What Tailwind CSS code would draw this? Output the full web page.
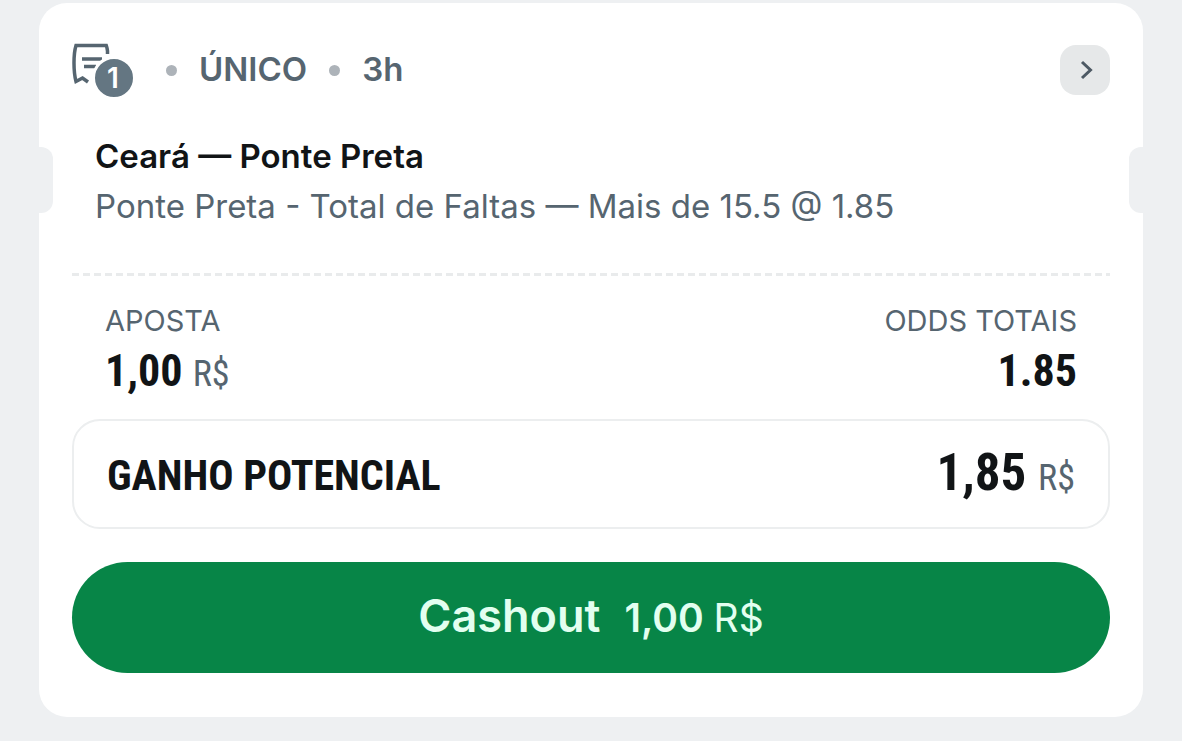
<!DOCTYPE html>
<html lang="pt-BR">

<head>
    <meta charset="UTF-8">
    <meta name="viewport" content="width=device-width, initial-scale=1.0">
    <title>Aposta</title>
    <script src="https://cdn.jsdelivr.net/npm/@tailwindcss/browser@4"></script>
</head>

<body class="min-h-screen bg-[#eef0f2] px-[39px] pt-[3px] pb-6 font-['Inter',sans-serif] text-[#566570]">

    <main class="relative rounded-[28px] bg-white px-[33px] pt-[42px] pb-11">
        <!-- Recortes laterales -->
        <span class="absolute left-0 top-36 h-[66px] w-[14px] rounded-r-xl bg-[#eef0f2]"></span>
        <span class="absolute right-0 top-36 h-[66px] w-[14px] rounded-l-xl bg-[#eef0f2]"></span>

        <header class="flex h-[50px] items-center justify-between">
            <div class="flex items-center text-[33px] font-semibold">
                <div class="relative h-[54px] w-[62px]">
                    <svg class="h-full w-full" viewBox="0 0 62 54" fill="none" stroke="#566570" stroke-width="3.500">
                        <path d="M35.500 11V8Q35.200 5 34.300 2.500H4Q2 9 2 20Q2 31 4 38.500L10.500 35L16 39" />
                        <path d="M10 16H30M12 23.500H24" />
                        <circle cx="42" cy="35" r="20.500" fill="#647682" stroke="#fff" stroke-width="3" />
                    </svg>
                    <span class="absolute left-[22px] top-4 w-[38px] text-center text-[28px] leading-[38px] font-semibold text-white">1</span>
                </div>
                <span class="ml-8 size-[11px] rounded-full bg-[#adb3b9]"></span>
                <span class="ml-[22px]">ÚNICO</span>
                <span class="ml-[22px] size-[11px] rounded-full bg-[#adb3b9]"></span>
                <span class="ml-[22px]">3h</span>
            </div>
            <button type="button" aria-label="Ver detalhes" class="flex size-[50px] items-center justify-center rounded-2xl bg-[#e6e8e9]">
                <svg class="size-5" viewBox="0 0 20 20" fill="none" stroke="#4d5964" stroke-width="3">
                    <path d="M7 2L15.500 10L7 18" />
                </svg>
            </button>
        </header>

        <section class="mt-9 px-[23px] text-[33px] leading-[50px]">
            <h1 class="font-semibold text-[#111416]">Ceará — Ponte Preta</h1>
            <p>Ponte Preta - Total de Faltas — Mais de 15.5 @ 1.85</p>
        </section>

        <div class="mt-[42px] h-[3px] bg-[repeating-linear-gradient(90deg,#e9ebec_0_7px,transparent_7px_11px)]"></div>

        <dl class="mt-[25px] flex justify-between px-[33px]">
            <div>
                <dt class="text-[29px] leading-10">APOSTA</dt>
                <dd class="font-['Roboto_Condensed','Liberation_Sans_Narrow',sans-serif] text-[44px] leading-[60px] font-bold text-[#111416]">1,00 <span class="text-[36px] font-normal text-[#566570]">R$</span></dd>
            </div>
            <div class="text-right">
                <dt class="text-[29px] leading-10">ODDS TOTAIS</dt>
                <dd class="font-['Roboto_Condensed','Liberation_Sans_Narrow',sans-serif] text-[44px] leading-[60px] font-bold text-[#111416]">1.85</dd>
            </div>
        </dl>

        <div class="mt-[15px] flex h-[110px] items-baseline justify-between rounded-[28px] border-2 border-[#eceeef] px-[33px] font-['Roboto_Condensed','Liberation_Sans_Narrow',sans-serif] leading-[104px] font-bold text-[#111416]">
            <h2 class="text-[42px]">GANHO POTENCIAL</h2>
            <p class="text-[51px]">1,85 <span class="text-[36px] font-normal text-[#566570]">R$</span></p>
        </div>

        <button type="button" class="mt-[33px] flex h-[111px] w-full items-baseline justify-center gap-6 rounded-full bg-[#078547] text-[45px] leading-[108px] font-semibold text-[#e2fff0]">
            <span>Cashout</span>
            <span class="text-[39px]">1,00 <span class="font-normal">R$</span></span>
        </button>
    </main>

</body>

</html>
